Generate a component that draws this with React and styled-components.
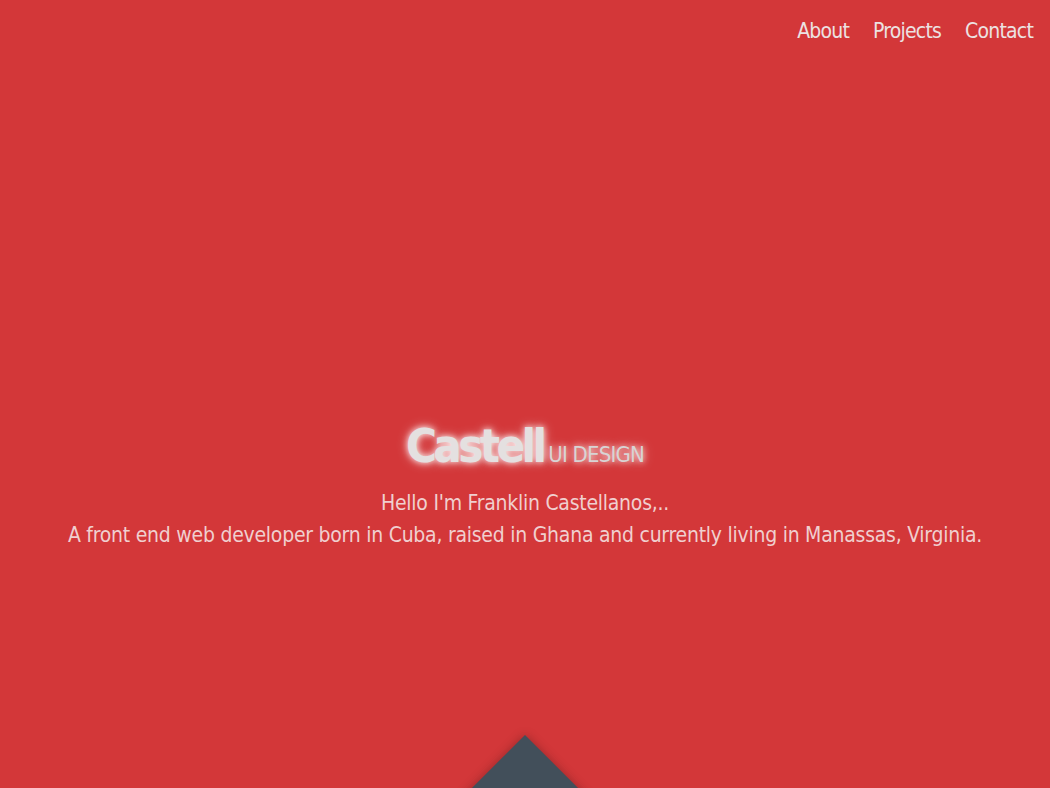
import React from 'react'
import styled, { createGlobalStyle } from 'styled-components'

const Global = createGlobalStyle`
  html, body {
    margin: 0;
    padding: 0;
    background: #d33739;
  }
  * { box-sizing: border-box; }
`

const Hero = styled.section`
  height: 788px;
  background: #d33739;
  display: flex;
  flex-direction: column;
  align-items: center;
  overflow: hidden;
  font-family: "DejaVu Sans Condensed", "DejaVu Sans", sans-serif;
  font-stretch: condensed;
`

const Nav = styled.nav`
  align-self: stretch;
  display: flex;
  justify-content: flex-end;
  gap: 24px;
  padding: 19px 17px 0 0;
`

const NavLink = styled.a`
  color: #ece2e2;
  font-size: 21px;
  letter-spacing: -0.8px;
  text-decoration: none;
  cursor: pointer;
`

const Middle = styled.div`
  flex: 1;
  display: flex;
  flex-direction: column;
  align-items: center;
  justify-content: flex-end;
  padding-bottom: 215px;
`

const Logo = styled.h1`
  margin: 0 0 18px;
  display: flex;
  align-items: baseline;
  line-height: 1;
  text-shadow: 0 0 6px rgba(255, 255, 255, 0.9), 0 0 12px rgba(255, 255, 255, 0.5);
`

const LogoMain = styled.span`
  color: #e4e0e0;
  font-size: 47px;
  font-weight: bold;
  letter-spacing: -3.6px;
  margin-right: 5px;
`

const LogoSub = styled.span`
  color: #d8d4d4;
  font-size: 22px;
  font-weight: normal;
  letter-spacing: -0.8px;
`

const Intro = styled.p`
  margin: 0;
  color: #f0cfcf;
  font-size: 21px;
  line-height: 32px;
  text-align: center;
  letter-spacing: -0.25px;
  font-weight: 300;
`

const Diamond = styled.div`
  width: 150px;
  height: 150px;
  background: #424f5a;
  transform: rotate(45deg);
  margin-bottom: -128px;
  box-shadow: 0 0 10px rgba(40, 20, 20, 0.35);
  flex-shrink: 0;
`

export default function App() {
  return (
    <>
      <Global />
      <Hero>
        <Nav>
          <NavLink>About</NavLink>
          <NavLink>Projects</NavLink>
          <NavLink>Contact</NavLink>
        </Nav>
        <Middle>
          <Logo>
            <LogoMain>Castell</LogoMain>
            <LogoSub>UI DESIGN</LogoSub>
          </Logo>
          <Intro>
            Hello I'm Franklin Castellanos,..
            <br />
            A front end web developer born in Cuba, raised in Ghana and currently living in Manassas, Virginia.
          </Intro>
        </Middle>
        <Diamond />
      </Hero>
    </>
  )
}
